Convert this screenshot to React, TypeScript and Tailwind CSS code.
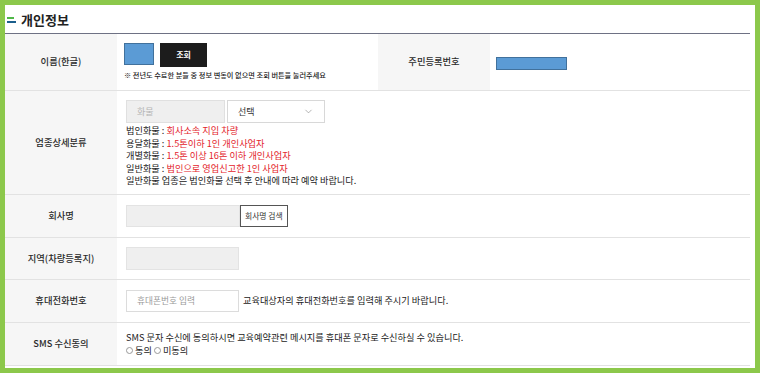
import { ChevronDown } from 'lucide-react'

const font = { fontFamily: '"Noto Sans CJK KR", "Noto Sans", sans-serif' }

const categories = [
  { name: '법인화물', desc: '회사소속 지입 차량' },
  { name: '용달화물', desc: '1.5톤이하 1인 개인사업자' },
  { name: '개별화물', desc: '1.5톤 이상 16톤 이하 개인사업자' },
  { name: '일반화물', desc: '법인으로 영업신고한 1인 사업자' },
]

function Label({ children }: { children: React.ReactNode }) {
  return (
    <div className="w-[112px] shrink-0 bg-[#f6f6f6] flex items-center justify-center text-[9.3px] font-medium text-[#2a2a2a]">
      {children}
    </div>
  )
}

export default function App() {
  return (
    <div className="w-[760px] h-[373px] bg-[#8cc84b] p-[5px]" style={font}>
      <div className="h-full bg-white pr-[5px]">
        <div className="h-[29px] border-b border-[#6e7184] flex items-center pl-[2px]">
          <div className="flex flex-col gap-[2px] mr-[5px] mt-[1px]">
            <span className="block w-[7px] h-[2px] bg-[#4fb848]" />
            <span className="block w-[9px] h-[2px] bg-[#1b5e8c]" />
          </div>
          <h1 className="text-[13px] font-bold text-[#222] leading-none">개인정보</h1>
        </div>

        {/* 이름 / 주민등록번호 */}
        <div className="h-[57px] flex border-b border-[#e2e2e2]">
          <Label>이름(한글)</Label>
          <div className="w-[261px] shrink-0 pl-[7px] pt-[9px]">
            <div className="flex items-start gap-[6px]">
              <div className="w-[30px] h-[22px] bg-[#5b9bd5] border border-[#41719c]" />
              <button className="w-[47px] h-[24px] bg-[#1c1c1c] text-white text-[8px] font-bold">조회</button>
            </div>
            <p className="mt-[3px] text-[7.2px] font-medium text-[#222] leading-[10px] whitespace-nowrap">
              ※ 전년도 수료한 분들 중 정보 변동이 없으면 조회 버튼을 눌러주세요
            </p>
          </div>
          <Label>주민등록번호</Label>
          <div className="flex-1 pl-[6px] flex items-center">
            <div className="w-[71px] h-[13px] bg-[#5b9bd5] border border-[#41719c] mt-[3px]" />
          </div>
        </div>

        {/* 업종상세분류 */}
        <div className="h-[104px] flex border-b border-[#e2e2e2]">
          <Label>업종상세분류</Label>
          <div className="flex-1 pl-[9px] pt-[9px]">
            <div className="flex gap-[2px]">
              <div className="w-[99px] h-[23px] bg-[#efefef] border border-[#e0e0e0] flex items-center pl-[10px] text-[9px] text-[#b5b5b5]">
                화물
              </div>
              <div className="w-[98px] h-[23px] bg-white border border-[#d8d8d8] flex items-center justify-between pl-[10px] pr-[10px] text-[9px] text-[#333]">
                선택
                <ChevronDown size={11} strokeWidth={1.2} className="text-[#777]" />
              </div>
            </div>
            <div className="mt-[1px] text-[9.2px] leading-[12.5px] text-[#222] whitespace-nowrap">
              {categories.map((c) => (
                <div key={c.name}>
                  {c.name} : <span className="text-[#e3242b]">{c.desc}</span>
                </div>
              ))}
              <div>일반화물 업종은 법인화물 선택 후 안내에 따라 예약 바랍니다.</div>
            </div>
          </div>
        </div>

        {/* 회사명 */}
        <div className="h-[43px] flex border-b border-[#e2e2e2]">
          <Label>회사명</Label>
          <div className="flex-1 pl-[9px] flex items-center">
            <div className="w-[114px] h-[22px] bg-[#efefef] border border-[#e3e3e3]" />
            <button className="h-[22px] px-[4px] bg-white border border-[#555] text-[7.8px] text-[#333]">회사명 검색</button>
          </div>
        </div>

        {/* 지역 */}
        <div className="h-[42px] flex border-b border-[#e2e2e2]">
          <Label>지역(차량등록지)</Label>
          <div className="flex-1 pl-[9px] flex items-center">
            <div className="w-[113px] h-[23px] bg-[#efefef] border border-[#e3e3e3]" />
          </div>
        </div>

        {/* 휴대전화번호 */}
        <div className="h-[43px] flex border-b border-[#e2e2e2]">
          <Label>휴대전화번호</Label>
          <div className="flex-1 pl-[9px] flex items-center">
            <div className="w-[113px] h-[22px] bg-white border border-[#dcdcdc] flex items-center pl-[10px] text-[8.7px] text-[#999]">
              휴대폰번호 입력
            </div>
            <span className="ml-[4px] text-[9.2px] text-[#222]">교육대상자의 휴대전화번호를 입력해 주시기 바랍니다.</span>
          </div>
        </div>

        {/* SMS */}
        <div className="h-[43px] flex border-b border-[#e2e2e2]">
          <Label>SMS 수신동의</Label>
          <div className="flex-1 pl-[9px] flex flex-col justify-center text-[9.2px] text-[#222] leading-[13px]">
            <div>SMS 문자 수신에 동의하시면 교육예약관련 메시지를 휴대폰 문자로 수신하실 수 있습니다.</div>
            <div className="flex items-center">
              <span className="inline-block w-[7px] h-[7px] rounded-full border border-[#999] mr-[2px]" />
              동의
              <span className="inline-block w-[7px] h-[7px] rounded-full border border-[#999] ml-[2px] mr-[2px]" />
              미동의
            </div>
          </div>
        </div>
      </div>
    </div>
  )
}
